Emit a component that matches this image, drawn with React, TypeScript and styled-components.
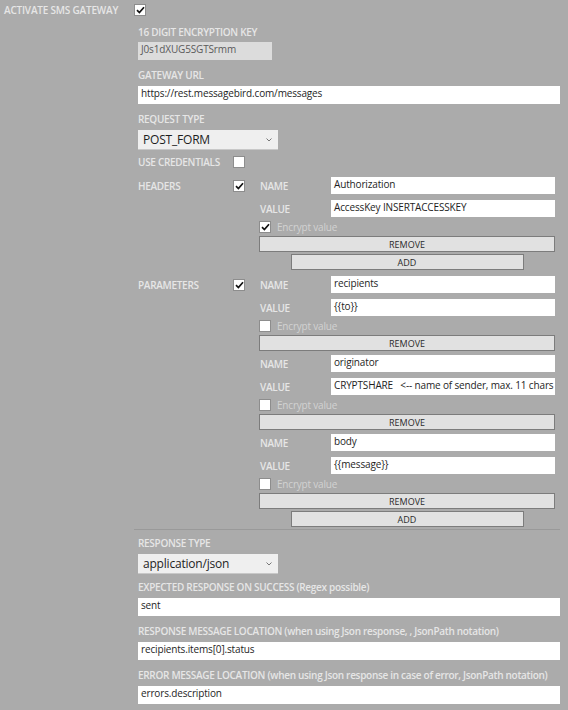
import React from "react";
import styled, { createGlobalStyle } from "styled-components";

const Global = createGlobalStyle`
  html, body { margin: 0; padding: 0; background: #ababab; }
  body { font-family: "Open Sans", "Noto Sans", sans-serif; }
  * { box-sizing: border-box; }
`;

const Page = styled.div`
  width: 568px;
  min-height: 710px;
  background: #ababab;
  padding: 4px 0 0 0;
`;

const TopRow = styled.div`
  display: flex;
  align-items: center;
  height: 12px;
`;

const TopLabel = styled.span`
  width: 134px;
  padding-left: 4px;
  font-size: 10px;
  font-weight: 600;
  letter-spacing: -0.2px;
  color: #e6e6e6;
  line-height: 12px;
  white-space: nowrap;
`;

const Content = styled.div`
  margin-left: 138px;
  width: 422px;
  display: flex;
  flex-direction: column;
`;

const FieldLabel = styled.div<{ $top?: number; $bottom?: number }>`
  font-size: 10px;
  font-weight: 600;
  letter-spacing: -0.3px;
  color: #e6e6e6;
  line-height: 14px;
  white-space: nowrap;
  margin-top: ${(p) => p.$top ?? 8}px;
  margin-bottom: ${(p) => p.$bottom ?? 4}px;
`;

const TextInput = styled.div<{ $width?: number; $disabled?: boolean; $h?: number }>`
  width: ${(p) => (p.$width ? `${p.$width}px` : "100%")};
  height: ${(p) => p.$h ?? 18}px;
  background: ${(p) => (p.$disabled ? "#dcdcdc" : "#ffffff")};
  color: ${(p) => (p.$disabled ? "#5a5a5a" : "#1e1e1e")};
  font-size: 10px;
  letter-spacing: -0.15px;
  line-height: ${(p) => (p.$h ?? 18) - 3}px;
  padding: 0 3px;
  white-space: pre;
  overflow: hidden;
`;

const Select = styled.div`
  width: 140px;
  height: 20px;
  background: #efefef;
  border-bottom: 1px solid #c8c8c8;
  display: flex;
  align-items: center;
  justify-content: space-between;
  padding: 0 6px 0 5px;
  font-size: 12px;
  letter-spacing: -0.2px;
  color: #1e1e1e;
`;

const Chevron = styled.svg`
  width: 6px;
  height: 4px;
`;

const Box = styled.span`
  width: 12px;
  height: 12px;
  flex: none;
  background: #ffffff;
  border: 1px solid #8d8d8d;
  display: inline-flex;
  align-items: center;
  justify-content: center;
`;

const CheckIcon = styled.svg`
  width: 9px;
  height: 8px;
`;

function Checkbox({ checked }: { checked?: boolean }) {
  return (
    <Box>
      {checked && (
        <CheckIcon viewBox="0 0 9 8">
          <path d="M1 4.2 L3.4 6.6 L8 1.2" fill="none" stroke="#111" strokeWidth="1.7" />
        </CheckIcon>
      )}
    </Box>
  );
}

const ToggleRow = styled.div`
  display: flex;
  align-items: center;
  height: 12px;
  margin-top: 6px;
`;

const RowLabel = styled.span`
  width: 95px;
  font-size: 10px;
  font-weight: 600;
  letter-spacing: -0.3px;
  color: #e6e6e6;
  line-height: 12px;
  white-space: nowrap;
`;

const Group = styled.div<{ $top: number }>`
  display: grid;
  grid-template-columns: 95px 26px 296px;
  margin-top: ${(p) => p.$top}px;
`;

const GroupHead = styled.div`
  display: flex;
  align-items: center;
  height: 17px;
  font-size: 10px;
  font-weight: 600;
  letter-spacing: -0.3px;
  color: #e6e6e6;
`;

const SubArea = styled.div`
  display: flex;
  flex-direction: column;
`;

const PairRow = styled.div<{ $top: number }>`
  display: flex;
  align-items: center;
  margin-top: ${(p) => p.$top}px;
`;

const PairLabel = styled.span`
  width: 72px;
  padding-left: 1px;
  font-size: 10px;
  font-weight: 600;
  letter-spacing: -0.3px;
  color: #e6e6e6;
`;

const EncryptRow = styled.div`
  display: flex;
  align-items: center;
  gap: 6px;
  height: 12px;
  margin-top: 4px;
  font-size: 10px;
  letter-spacing: -0.2px;
  color: #d2d2d2;
`;

const Button = styled.div<{ $narrow?: boolean; $top: number }>`
  width: ${(p) => (p.$narrow ? "233px" : "296px")};
  align-self: center;
  height: 16px;
  margin-top: ${(p) => p.$top}px;
  background: #e1e1e1;
  border: 1px solid #7c7c7c;
  font-size: 9px;
  color: #2b2b2b;
  display: flex;
  align-items: center;
  justify-content: center;
`;

const Separator = styled.hr`
  margin: 2px 0 0 -4px;
  width: 426px;
  border: none;
  border-top: 1px solid #999999;
  height: 0;
`;

type Pair = { name: string; value: string; encrypted: boolean };

function PairBlock({ pair, first }: { pair: Pair; first: boolean }) {
  return (
    <>
      <PairRow $top={first ? 0 : 4}>
        <PairLabel>NAME</PairLabel>
        <TextInput $width={224} $h={17}>{pair.name}</TextInput>
      </PairRow>
      <PairRow $top={6}>
        <PairLabel>VALUE</PairLabel>
        <TextInput $width={224} $h={17}>{pair.value}</TextInput>
      </PairRow>
      <EncryptRow>
        <Checkbox checked={pair.encrypted} />
        Encrypt value
      </EncryptRow>
      <Button $top={3}>REMOVE</Button>
    </>
  );
}

function PairGroup({ title, pairs, top }: { title: string; pairs: Pair[]; top: number }) {
  return (
    <Group $top={top}>
      <GroupHead>{title}</GroupHead>
      <GroupHead>
        <Checkbox checked />
      </GroupHead>
      <SubArea>
        {pairs.map((p, i) => (
          <PairBlock key={i} pair={p} first={i === 0} />
        ))}
        <Button $narrow $top={2}>ADD</Button>
      </SubArea>
    </Group>
  );
}

const ChevronDown = () => (
  <Chevron viewBox="0 0 6 4">
    <path d="M0.5 0.5 L3 3 L5.5 0.5" fill="none" stroke="#777" strokeWidth="1" />
  </Chevron>
);

export default function App() {
  const headers: Pair[] = [
    { name: "Authorization", value: "AccessKey INSERTACCESSKEY", encrypted: true },
  ];
  const params: Pair[] = [
    { name: "recipients", value: "{{to}}", encrypted: false },
    { name: "originator", value: "CRYPTSHARE   <-- name of sender, max. 11 chars", encrypted: false },
    { name: "body", value: "{{message}}", encrypted: false },
  ];
  return (
    <Page>
      <Global />
      <TopRow>
        <TopLabel>ACTIVATE SMS GATEWAY</TopLabel>
        <Checkbox checked />
      </TopRow>
      <Content>
        <FieldLabel $top={9} $bottom={3}>16 DIGIT ENCRYPTION KEY</FieldLabel>
        <TextInput $width={134} $disabled>J0s1dXUG5SGTSrmm</TextInput>
        <FieldLabel>GATEWAY URL</FieldLabel>
        <TextInput>https://rest.messagebird.com/messages</TextInput>
        <FieldLabel>REQUEST TYPE</FieldLabel>
        <Select>
          POST_FORM
          <ChevronDown />
        </Select>
        <ToggleRow>
          <RowLabel>USE CREDENTIALS</RowLabel>
          <Checkbox />
        </ToggleRow>
        <PairGroup title="HEADERS" pairs={headers} top={9} />
        <PairGroup title="PARAMETERS" pairs={params} top={6} />
        <Separator />
        <FieldLabel $top={6}>RESPONSE TYPE</FieldLabel>
        <Select>
          application/json
          <ChevronDown />
        </Select>
        <FieldLabel $top={6}>EXPECTED RESPONSE ON SUCCESS (Regex possible)</FieldLabel>
        <TextInput>sent</TextInput>
        <FieldLabel>RESPONSE MESSAGE LOCATION (when using Json response, , JsonPath notation)</FieldLabel>
        <TextInput>recipients.items[0].status</TextInput>
        <FieldLabel>ERROR MESSAGE LOCATION (when using Json response in case of error, JsonPath notation)</FieldLabel>
        <TextInput>errors.description</TextInput>
      </Content>
    </Page>
  );
}
